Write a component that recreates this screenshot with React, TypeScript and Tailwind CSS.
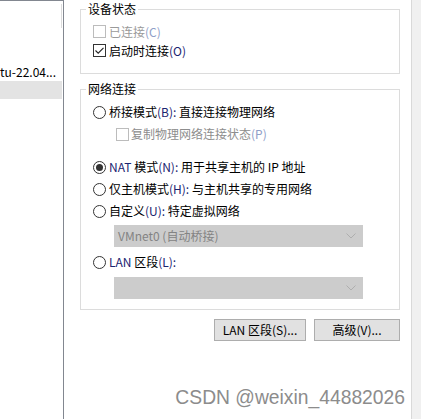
import React from "react"

const mn = "text-[#1b2470]"
const mnOff = "text-[#8fa0c8]"

function CheckBox({ checked = false, disabled = false }: { checked?: boolean; disabled?: boolean }) {
  return (
    <span
      className={`flex h-[13px] w-[13px] shrink-0 items-center justify-center border bg-white ${
        disabled ? "border-[#bcbcbc]" : "border-[#333333]"
      }`}
    >
      {checked && (
        <svg width="11" height="11" viewBox="0 0 11 11" fill="none">
          <path d="M1.5 5.5 L4.2 8.2 L9.5 2.8" stroke="#222" strokeWidth="1.1" />
        </svg>
      )}
    </span>
  )
}

function Radio({ selected = false }: { selected?: boolean }) {
  return (
    <span className="flex h-[13px] w-[13px] shrink-0 items-center justify-center rounded-full border border-[#333333] bg-white">
      {selected && <span className="h-[7px] w-[7px] rounded-full bg-[#333333]" />}
    </span>
  )
}

function Combo({ text }: { text?: string }) {
  return (
    <div className="ml-[21px] flex h-[22px] w-[249px] items-center justify-between border border-[#cccccc] bg-[#cccccc] pl-[3px] pr-[6px] text-[#838383]">
      <span>{text}</span>
      <svg width="10" height="6" viewBox="0 0 10 6" fill="none">
        <path d="M0.5 0.5 L5 5 L9.5 0.5" stroke="#aeaeae" strokeWidth="1" />
      </svg>
    </div>
  )
}

export default function App() {
  return (
    <div className="relative flex h-[419px] w-[421px] overflow-hidden bg-white font-['Noto_Sans_CJK_SC','Microsoft_YaHei',sans-serif] text-[12px] leading-[16px] text-black">
      {/* list pane */}
      <div className="relative flex w-[64px] shrink-0 flex-col border-r border-t border-[#828790] pt-[62px]">
        <div className="absolute right-[1px] top-[3px] h-[24px] w-px bg-[#dcdcdc]" />
        <div className="flex h-[18px] items-center justify-end overflow-hidden whitespace-nowrap pr-[7px]">
          Ubuntu-22.04...
        </div>
        <div className="h-[18px] w-[62px] bg-[#e3e3e3]" />
      </div>

      {/* settings */}
      <div className="flex w-[347px] shrink-0 flex-col pl-[16px] pr-[11px]">
        <fieldset className="mt-[1px] w-[320px] border border-[#dcdcdc] pb-[13px]">
          <legend className="ml-[5px] px-[2px] leading-[16px]">设备状态</legend>
          <div className="flex flex-col pl-[12px] pt-[5px]">
            <label className="flex h-[19px] items-center gap-[3px] text-[#9a9a9a]">
              <CheckBox disabled />
              <span>
                已连接<span className={mnOff}>(C)</span>
              </span>
            </label>
            <label className="flex h-[19px] items-center gap-[3px]">
              <CheckBox checked />
              <span>
                启动时连接<span className={mn}>(O)</span>
              </span>
            </label>
          </div>
        </fieldset>

        <fieldset className="mt-[7px] w-[320px] border border-[#dcdcdc] pb-[10px]">
          <legend className="ml-[5px] px-[2px] leading-[16px]">网络连接</legend>
          <div className="flex flex-col pl-[12px] pt-[4px]">
            <label className="flex h-[22px] items-center gap-[3px]">
              <Radio />
              <span>
                桥接模式<span className={mn}>(B):</span> 直接连接物理网络
              </span>
            </label>
            <label className="ml-[23px] flex h-[22px] items-center gap-[2px] text-[#8d8d8d]">
              <CheckBox disabled />
              <span>
                复制物理网络连接状态<span className={mnOff}>(P)</span>
              </span>
            </label>
            <label className="mt-[11px] flex h-[22px] items-center gap-[3px]">
              <Radio selected />
              <span>
                <span className={mn}>NAT</span> 模式<span className={mn}>(N):</span> 用于共享主机的 IP 地址
              </span>
            </label>
            <label className="flex h-[22px] items-center gap-[3px]">
              <Radio />
              <span>
                仅主机模式<span className={mn}>(H):</span> 与主机共享的专用网络
              </span>
            </label>
            <label className="flex h-[22px] items-center gap-[3px]">
              <Radio />
              <span>
                自定义<span className={mn}>(U):</span> 特定虚拟网络
              </span>
            </label>
            <div className="mt-[3px]">
              <Combo text="VMnet0 (自动桥接)" />
            </div>
            <label className="mt-[4px] flex h-[22px] items-center gap-[3px]">
              <Radio />
              <span>
                <span className={mn}>LAN</span> 区段<span className={mn}>(L):</span>
              </span>
            </label>
            <div className="mt-[4px]">
              <Combo />
            </div>
          </div>
        </fieldset>

        <div className="mt-[9px] flex w-[320px] justify-end gap-[8px]">
          <button className="flex h-[22px] w-[92px] items-center justify-center border border-[#adadad] bg-[#e1e1e1]">
            LAN 区段(S)...
          </button>
          <button className="flex h-[22px] w-[86px] items-center justify-center border border-[#adadad] bg-[#e1e1e1]">
            高级(V)...
          </button>
        </div>
      </div>

      {/* right strip */}
      <div className="w-[10px] shrink-0 border-l border-[#d9d9d9] bg-[#f0f0f0]" />

      <div className="absolute bottom-[10px] right-[16px] whitespace-nowrap font-['Liberation_Sans',Arial,sans-serif] text-[19.3px] leading-[22px] text-[#8c8c8c] [text-shadow:0_0_2px_#ffffff]">
        CSDN @weixin_44882026
      </div>
    </div>
  )
}
